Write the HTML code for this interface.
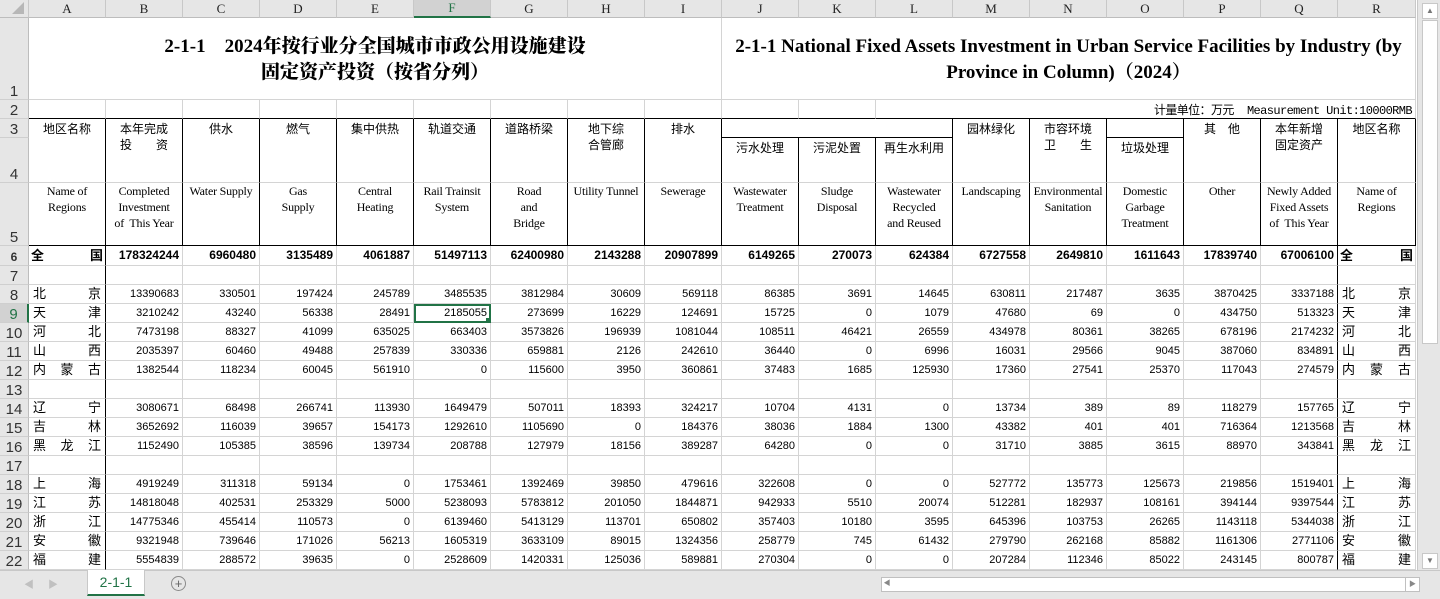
<!DOCTYPE html>
<html><head><meta charset="utf-8"><style>
body{margin:0;width:1440px;height:598px;overflow:hidden;background:#fff;position:relative;font-family:"Liberation Sans","Noto Sans CJK SC",sans-serif;}
table{position:absolute;left:0;top:0;border-collapse:separate;border-spacing:0;table-layout:fixed;width:1416px;}
td{border-right:1px solid #d4d4d4;border-bottom:1px solid #d4d4d4;padding:0 3px;font-size:11px;line-height:13px;color:#000;white-space:nowrap;overflow:hidden;text-align:right;vertical-align:middle;box-sizing:border-box;}
tr.d td{height:19px;}
td.rh{background:#e6e6e6;color:#333;font-size:15px;text-align:center;vertical-align:bottom;padding:0;border-right:1px solid #bdbdbd;border-bottom:1px solid #cfcfcf;line-height:15px}
tr.ch td{background:#e6e6e6;color:#222;font-family:"Liberation Serif",serif;font-size:13px;line-height:14px;text-align:center;border-right:1px solid #c8c8c8;border-bottom:1px solid #bdbdbd;padding:0}
.r{border-right:1px solid #000}
.b{border-bottom:1px solid #000}
.h{text-align:center;vertical-align:top;font-size:12px;line-height:16px;padding-top:2px;}
.e{text-align:center;vertical-align:top;font-family:"Liberation Serif",serif;font-size:12px;line-height:16px;padding:0;letter-spacing:-0.2px}
.n{display:flex;justify-content:space-between;font-size:13px;line-height:14px;text-align:left;padding:0 2px;}
td.nm{text-align:left;padding:0 2px}
tr.t td{font-weight:bold;font-size:12px}
</style></head><body>
<table>
<colgroup><col style="width:29px"><col style="width:77px"><col style="width:77px"><col style="width:77px"><col style="width:77px"><col style="width:77px"><col style="width:77px"><col style="width:77px"><col style="width:77px"><col style="width:77px"><col style="width:77px"><col style="width:77px"><col style="width:77px"><col style="width:77px"><col style="width:77px"><col style="width:77px"><col style="width:77px"><col style="width:77px"><col style="width:78px"></colgroup>
<tr class="ch" style="height:18px"><td style="position:relative;height:18px"><svg width="14" height="14" style="position:absolute;right:3px;bottom:2px"><path d="M13 1 L13 13 L1 13 Z" fill="#b7b7b7"/></svg></td><td>A</td><td>B</td><td>C</td><td>D</td><td>E</td><td style="background:#d2d2d2;color:#217346;border-bottom:2px solid #217346">F</td><td>G</td><td>H</td><td>I</td><td>J</td><td>K</td><td>L</td><td>M</td><td>N</td><td>O</td><td>P</td><td>Q</td><td>R</td></tr>
<tr style="height:82px"><td class="rh" style="height:82px">1</td>
<td colspan="9" style="text-align:center;font-family:'Liberation Serif','Noto Serif CJK SC',serif;font-weight:900;font-size:19px;line-height:26px;padding:0;vertical-align:top"><div style="margin-top:16px">2-1-1&nbsp;&nbsp;&nbsp;&nbsp;2024年按行业分全国城市市政公用设施建设</div><div>固定资产投资（按省分列）</div></td>
<td colspan="9" style="text-align:center;font-family:'Liberation Serif','Noto Serif CJK SC',serif;font-weight:bold;font-size:19px;line-height:26px;vertical-align:top;padding:0 4px"><div style="margin-top:16px">2-1-1 National Fixed Assets Investment in Urban Service Facilities by Industry (by</div><div>Province in Column)（2024）</div></td></tr>
<tr class="d"><td class="rh">2</td><td class="b"></td><td class="b"></td><td class="b"></td><td class="b"></td><td class="b"></td><td class="b"></td><td class="b"></td><td class="b"></td><td class="b"></td><td class="b"></td><td class="b"></td><td class="b" colspan="7" style="font-size:12px;text-align:right;padding-right:3px;font-family:'Liberation Mono','Noto Sans CJK SC',monospace;vertical-align:bottom;letter-spacing:-0.6px">计量单位：万元&nbsp;&nbsp;Measurement Unit:10000RMB</td></tr>
<tr style="height:19px"><td class="rh" style="height:19px">3</td>
<td class="r h" rowspan="2">地区名称</td><td class="r h" rowspan="2">本年完成<br>投　　资</td><td class="r h" rowspan="2">供水</td><td class="r h" rowspan="2">燃气</td><td class="r h" rowspan="2">集中供热</td><td class="r h" rowspan="2">轨道交通</td><td class="r h" rowspan="2">道路桥梁</td><td class="r h" rowspan="2">地下综<br>合管廊</td><td class="r h" rowspan="2">排水</td><td class="r b" colspan="3"></td><td class="r h" rowspan="2">园林绿化</td><td class="r h" rowspan="2">市容环境<br>卫　　生</td><td class="r b"></td><td class="r h" rowspan="2">其　他</td><td class="r h" rowspan="2">本年新增<br>固定资产</td><td class="r h" rowspan="2">地区名称</td></tr>
<tr style="height:45px"><td class="rh" style="height:45px">4</td><td class="r h">污水处理</td><td class="r h">污泥处置</td><td class="r h">再生水利用</td><td class="r h">垃圾处理</td></tr>
<tr style="height:63px"><td class="rh" style="height:63px">5</td><td class="r b e">Name of<br>Regions</td><td class="r b e">Completed<br>Investment<br>of&nbsp; This Year</td><td class="r b e">Water Supply</td><td class="r b e">Gas<br>Supply</td><td class="r b e">Central<br>Heating</td><td class="r b e">Rail Trainsit<br>System</td><td class="r b e">Road<br>and<br>Bridge</td><td class="r b e">Utility Tunnel</td><td class="r b e">Sewerage</td><td class="r b e">Wastewater<br>Treatment</td><td class="r b e">Sludge<br>Disposal</td><td class="r b e">Wastewater<br>Recycled<br>and Reused</td><td class="r b e">Landscaping</td><td class="r b e">Environmental<br>Sanitation</td><td class="r b e">Domestic<br>Garbage<br>Treatment</td><td class="r b e">Other</td><td class="r b e">Newly Added<br>Fixed Assets<br>of&nbsp; This Year</td><td class="r b e">Name of<br>Regions</td></tr>
<tr class="t" style="height:20px"><td class="rh" style="height:20px">6</td><td class="r nm"><div class="n" style="padding:0;font-weight:bold"><span>全</span><span>国</span></div></td><td>178324244</td><td>6960480</td><td>3135489</td><td>4061887</td><td>51497113</td><td>62400980</td><td>2143288</td><td>20907899</td><td>6149265</td><td>270073</td><td>624384</td><td>6727558</td><td>2649810</td><td>1611643</td><td>17839740</td><td class="r">67006100</td><td class="nm"><div class="n" style="padding:0;font-weight:bold"><span>全</span><span>国</span></div></td></tr>
<tr class="d"><td class="rh">7</td><td class="r"></td><td></td><td></td><td></td><td></td><td></td><td></td><td></td><td></td><td></td><td></td><td></td><td></td><td></td><td></td><td></td><td class="r"></td><td></td></tr>
<tr class="d"><td class="rh">8</td><td class="r nm"><div class="n"><span>北</span><span>京</span></div></td><td>13390683</td><td>330501</td><td>197424</td><td>245789</td><td>3485535</td><td>3812984</td><td>30609</td><td>569118</td><td>86385</td><td>3691</td><td>14645</td><td>630811</td><td>217487</td><td>3635</td><td>3870425</td><td class="r">3337188</td><td class="nm"><div class="n"><span>北</span><span>京</span></div></td></tr>
<tr class="d"><td class="rh" style="background:#d2d2d2;color:#217346;border-right:2px solid #217346">9</td><td class="r nm"><div class="n"><span>天</span><span>津</span></div></td><td>3210242</td><td>43240</td><td>56338</td><td>28491</td><td style="outline:2px solid #217346;outline-offset:-2px;position:relative">2185055<span style="position:absolute;right:-1px;bottom:-1px;width:5px;height:5px;background:#217346"></span></td><td>273699</td><td>16229</td><td>124691</td><td>15725</td><td>0</td><td>1079</td><td>47680</td><td>69</td><td>0</td><td>434750</td><td class="r">513323</td><td class="nm"><div class="n"><span>天</span><span>津</span></div></td></tr>
<tr class="d"><td class="rh">10</td><td class="r nm"><div class="n"><span>河</span><span>北</span></div></td><td>7473198</td><td>88327</td><td>41099</td><td>635025</td><td>663403</td><td>3573826</td><td>196939</td><td>1081044</td><td>108511</td><td>46421</td><td>26559</td><td>434978</td><td>80361</td><td>38265</td><td>678196</td><td class="r">2174232</td><td class="nm"><div class="n"><span>河</span><span>北</span></div></td></tr>
<tr class="d"><td class="rh">11</td><td class="r nm"><div class="n"><span>山</span><span>西</span></div></td><td>2035397</td><td>60460</td><td>49488</td><td>257839</td><td>330336</td><td>659881</td><td>2126</td><td>242610</td><td>36440</td><td>0</td><td>6996</td><td>16031</td><td>29566</td><td>9045</td><td>387060</td><td class="r">834891</td><td class="nm"><div class="n"><span>山</span><span>西</span></div></td></tr>
<tr class="d"><td class="rh">12</td><td class="r nm"><div class="n"><span>内</span><span>蒙</span><span>古</span></div></td><td>1382544</td><td>118234</td><td>60045</td><td>561910</td><td>0</td><td>115600</td><td>3950</td><td>360861</td><td>37483</td><td>1685</td><td>125930</td><td>17360</td><td>27541</td><td>25370</td><td>117043</td><td class="r">274579</td><td class="nm"><div class="n"><span>内</span><span>蒙</span><span>古</span></div></td></tr>
<tr class="d"><td class="rh">13</td><td class="r"></td><td></td><td></td><td></td><td></td><td></td><td></td><td></td><td></td><td></td><td></td><td></td><td></td><td></td><td></td><td></td><td class="r"></td><td></td></tr>
<tr class="d"><td class="rh">14</td><td class="r nm"><div class="n"><span>辽</span><span>宁</span></div></td><td>3080671</td><td>68498</td><td>266741</td><td>113930</td><td>1649479</td><td>507011</td><td>18393</td><td>324217</td><td>10704</td><td>4131</td><td>0</td><td>13734</td><td>389</td><td>89</td><td>118279</td><td class="r">157765</td><td class="nm"><div class="n"><span>辽</span><span>宁</span></div></td></tr>
<tr class="d"><td class="rh">15</td><td class="r nm"><div class="n"><span>吉</span><span>林</span></div></td><td>3652692</td><td>116039</td><td>39657</td><td>154173</td><td>1292610</td><td>1105690</td><td>0</td><td>184376</td><td>38036</td><td>1884</td><td>1300</td><td>43382</td><td>401</td><td>401</td><td>716364</td><td class="r">1213568</td><td class="nm"><div class="n"><span>吉</span><span>林</span></div></td></tr>
<tr class="d"><td class="rh">16</td><td class="r nm"><div class="n"><span>黑</span><span>龙</span><span>江</span></div></td><td>1152490</td><td>105385</td><td>38596</td><td>139734</td><td>208788</td><td>127979</td><td>18156</td><td>389287</td><td>64280</td><td>0</td><td>0</td><td>31710</td><td>3885</td><td>3615</td><td>88970</td><td class="r">343841</td><td class="nm"><div class="n"><span>黑</span><span>龙</span><span>江</span></div></td></tr>
<tr class="d"><td class="rh">17</td><td class="r"></td><td></td><td></td><td></td><td></td><td></td><td></td><td></td><td></td><td></td><td></td><td></td><td></td><td></td><td></td><td></td><td class="r"></td><td></td></tr>
<tr class="d"><td class="rh">18</td><td class="r nm"><div class="n"><span>上</span><span>海</span></div></td><td>4919249</td><td>311318</td><td>59134</td><td>0</td><td>1753461</td><td>1392469</td><td>39850</td><td>479616</td><td>322608</td><td>0</td><td>0</td><td>527772</td><td>135773</td><td>125673</td><td>219856</td><td class="r">1519401</td><td class="nm"><div class="n"><span>上</span><span>海</span></div></td></tr>
<tr class="d"><td class="rh">19</td><td class="r nm"><div class="n"><span>江</span><span>苏</span></div></td><td>14818048</td><td>402531</td><td>253329</td><td>5000</td><td>5238093</td><td>5783812</td><td>201050</td><td>1844871</td><td>942933</td><td>5510</td><td>20074</td><td>512281</td><td>182937</td><td>108161</td><td>394144</td><td class="r">9397544</td><td class="nm"><div class="n"><span>江</span><span>苏</span></div></td></tr>
<tr class="d"><td class="rh">20</td><td class="r nm"><div class="n"><span>浙</span><span>江</span></div></td><td>14775346</td><td>455414</td><td>110573</td><td>0</td><td>6139460</td><td>5413129</td><td>113701</td><td>650802</td><td>357403</td><td>10180</td><td>3595</td><td>645396</td><td>103753</td><td>26265</td><td>1143118</td><td class="r">5344038</td><td class="nm"><div class="n"><span>浙</span><span>江</span></div></td></tr>
<tr class="d"><td class="rh">21</td><td class="r nm"><div class="n"><span>安</span><span>徽</span></div></td><td>9321948</td><td>739646</td><td>171026</td><td>56213</td><td>1605319</td><td>3633109</td><td>89015</td><td>1324356</td><td>258779</td><td>745</td><td>61432</td><td>279790</td><td>262168</td><td>85882</td><td>1161306</td><td class="r">2771106</td><td class="nm"><div class="n"><span>安</span><span>徽</span></div></td></tr>
<tr class="d"><td class="rh">22</td><td class="r nm"><div class="n"><span>福</span><span>建</span></div></td><td>5554839</td><td>288572</td><td>39635</td><td>0</td><td>2528609</td><td>1420331</td><td>125036</td><td>589881</td><td>270304</td><td>0</td><td>0</td><td>207284</td><td>112346</td><td>85022</td><td>243145</td><td class="r">800787</td><td class="nm"><div class="n"><span>福</span><span>建</span></div></td></tr>
</table>
<div style="position:absolute;left:1417px;top:0;width:23px;height:570px;background:#e6e6e6;border-left:1px solid #c8c8c8"></div>
<div style="position:absolute;left:1422px;top:3px;width:14px;height:14px;background:#fff;border:1px solid #c8c8c8;text-align:center;font-size:8px;color:#777;line-height:14px">▲</div>
<div style="position:absolute;left:1422px;top:20px;width:14px;height:322px;background:#fff;border:1px solid #c8c8c8"></div>
<div style="position:absolute;left:1422px;top:553px;width:14px;height:14px;background:#fff;border:1px solid #c8c8c8;text-align:center;font-size:8px;color:#777;line-height:14px">▼</div>
<div style="position:absolute;left:0;top:570px;width:1440px;height:28px;background:#e6e6e6;border-top:1px solid #c8c8c8"></div>
<div style="position:absolute;left:24px;top:576px;font-size:10px;color:#c0c0c0">◀</div>
<div style="position:absolute;left:48px;top:576px;font-size:10px;color:#c0c0c0">▶</div>
<div style="position:absolute;left:87px;top:570px;width:56px;height:24px;background:#fff;border-left:1px solid #c8c8c8;border-right:1px solid #c8c8c8;border-bottom:2px solid #217346;text-align:center;font-size:14px;color:#217346;line-height:24px">2-1-1</div>
<div style="position:absolute;left:171px;top:576px;width:13px;height:13px;border:1px solid #8a8a8a;border-radius:50%;text-align:center;font-size:13px;line-height:13px;color:#666">+</div>
<div style="position:absolute;left:881px;top:577px;width:524px;height:13px;background:#fff;border:1px solid #c0c0c0"></div>
<div style="position:absolute;left:1405px;top:577px;width:13px;height:13px;background:#fff;border:1px solid #c0c0c0;font-size:7px;color:#888;text-align:center;line-height:13px">▶</div>
<div style="position:absolute;left:881px;top:577px;width:12px;height:13px;font-size:7px;color:#888;text-align:center;line-height:13px">◀</div>
</body></html>
